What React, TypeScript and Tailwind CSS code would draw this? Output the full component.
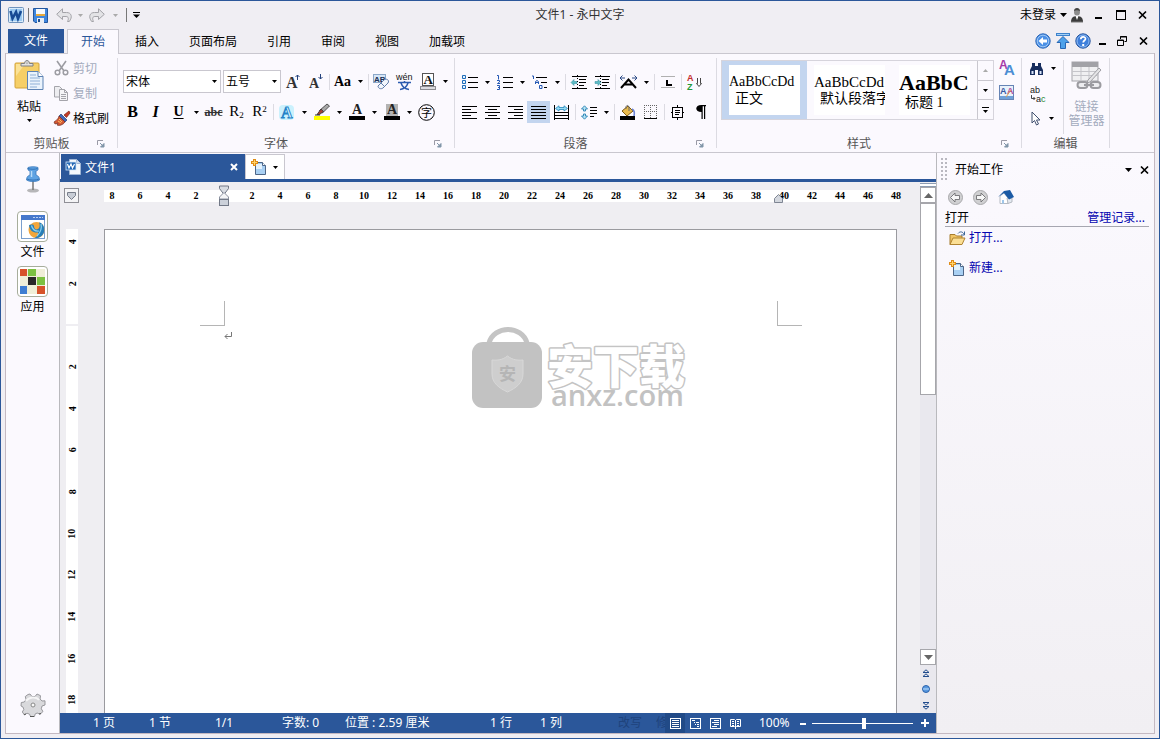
import React, { useState } from 'react';

interface SvgProps {
    w: number;
    h: number;
    children: React.ReactNode;
    className?: string;
}

const Svg: React.FC<SvgProps> = ({ w, h, children, className = '' }) => (
    <svg width={w} height={h} viewBox={`0 0 ${w} ${h}`} fill="none" className={`shrink-0 overflow-visible ${className}`} aria-hidden="true">
        {children}
    </svg>
);

const Caret: React.FC<{ className?: string }> = ({ className = 'text-black' }) => (
    <Svg w={5} h={3} className={className}>
        <path d="M0 0h5L2.5 3z" fill="currentColor" />
    </Svg>
);

const ToolButton: React.FC<{ label: string; active?: boolean; children: React.ReactNode }> = ({ label, active, children }) => (
    <button
        aria-label={label}
        className={`flex h-[22px] w-[23px] shrink-0 items-center justify-center font-['Liberation_Serif',serif] ${active ? 'bg-[#c3d5ef]' : 'hover:bg-[#dfe8f6]'}`}
    >
        {children}
    </button>
);

const CaretButton: React.FC<{ label: string }> = ({ label }) => (
    <button aria-label={label} className="flex h-[22px] w-3 shrink-0 items-center justify-center">
        <Caret />
    </button>
);

const Divider = () => <span className="flex h-4 w-1 shrink-0 justify-center"><span className="w-px bg-[#dcdbe2]" /></span>;

/* ---------- title bar icons ---------- */

const AppIcon = () => (
    <Svg w={16} h={16}>
        <rect x=".5" y=".5" width="15" height="15" rx="1" fill="#d9ebfa" stroke="#6f93bd" />
        <rect x="2" y="2" width="12" height="12" fill="#9ccaf1" />
        <path d="M2.5 4l2 7.5L8 5l2 6.5L13 4" stroke="#174a94" strokeWidth="2.6" />
    </Svg>
);

const SaveIcon = () => (
    <Svg w={15} h={15}>
        <path d="M.5.5h14v14H2L.5 13z" fill="#3f86dd" stroke="#23579f" />
        <rect x="3" y="1" width="9" height="6" fill="#f5f9fd" />
        <path d="M3 7h9" stroke="#e6a93c" strokeWidth="2" />
        <rect x="4" y="10" width="7" height="5" fill="#e8edf3" />
        <rect x="5" y="11" width="2" height="3" fill="#24518f" />
    </Svg>
);

const UndoIcon = ({ flip = false }: { flip?: boolean }) => (
    <Svg w={16} h={14} className={flip ? '-scale-x-100' : ''}>
        <path d="M6.5.8L.7 6.3l5.800 5.200V8.500H10c2.500 0 3 2 1.500 5h1.800c3.500-4.500 2.200-9-2.800-9h-4z" fill="#e3e3e6" stroke="#a3a3a8" />
    </Svg>
);

const PersonIcon = () => (
    <Svg w={14} h={15}>
        <ellipse cx="7" cy="4" rx="3" ry="3.5" fill="#8c8c8c" />
        <path d="M4 3c0-4 6-4 6 0-2-1-4-1-6 0z" fill="#444" />
        <path d="M1 14c0-4 2-6 6-6s6 2 6 6z" fill="#3c3c3c" />
        <path d="M5.5 8h3L7 12z" fill="#fff" />
        <path d="M1 14h12" stroke="#777" />
    </Svg>
);

const CloseIcon = () => (
    <Svg w={9} h={8}>
        <path d="M1 .5l7 7M8 .5l-7 7" stroke="#000" strokeWidth="1.7" />
    </Svg>
);

const MinIcon = () => <Svg w={8} h={8}><path d="M0 7h7" stroke="#000" strokeWidth="2" /></Svg>;

const MaxIcon = () => (
    <Svg w={10} h={10}>
        <rect x=".5" y=".5" width="9" height="9" stroke="#000" />
        <path d="M0 1h10" stroke="#000" strokeWidth="2" />
    </Svg>
);

const RestoreIcon = () => (
    <Svg w={10} h={10}>
        <path d="M3.5 3V.5h6v5h-2M3 1h7" stroke="#000" />
        <path d="M.5 4h6v5.5h-6zM0 4.500h7" stroke="#000" />
    </Svg>
);

const BackIcon = () => (
    <Svg w={16} h={16}>
        <circle cx="8" cy="8" r="7.2" fill="#4b90e6" stroke="#2e68b8" />
        <circle cx="8" cy="8" r="5.800" stroke="#9cc6f5" />
        <path d="M3.5 8L8 4v2.500h4v3H8V12z" fill="#fff" />
    </Svg>
);

const UpIcon = () => (
    <Svg w={14} h={16}>
        <rect x=".5" y=".5" width="13" height="2" fill="#a5d1f6" stroke="#3d82cc" />
        <path d="M7 3.5L1 9.500h3.500v6h5v-6H13z" fill="#4da1ea" stroke="#2767b5" />
    </Svg>
);

const HelpIcon = () => (
    <Svg w={16} h={16}>
        <circle cx="8" cy="8" r="7.2" fill="#3e7fdb" stroke="#27569f" />
        <circle cx="8" cy="8" r="6" stroke="#8db9f1" />
        <path d="M5.8 6.2c0-3 4.700-3 4.700-.4 0 1.700-2.300 1.700-2.300 3.600" stroke="#fff" strokeWidth="1.7" />
        <rect x="7.2" y="11" width="2" height="2" fill="#fff" />
    </Svg>
);

/* ---------- clipboard icons ---------- */

const PasteIcon = () => (
    <Svg w={30} h={31}>
        <rect x="1" y="3" width="24" height="25" rx="1" fill="#f6cf67" stroke="#d3a33a" />
        <path d="M2 4h9L2 16z" fill="#fbe297" />
        <path d="M7 6V3.500h3.500c0-4 5-4 5 0H19V6z" fill="#e3e3e3" stroke="#808080" />
        <circle cx="13" cy="2.8" r="1" fill="#fff" stroke="#888" strokeWidth=".6" />
        <path d="M13.5 11.500H24l5 5v13H13.500z" fill="#eaf3fc" stroke="#5d83b4" />
        <path d="M24 11.500v5h5" fill="#fff" stroke="#5d83b4" />
        <path d="M16 15h6M16 18h10M16 21h10M16 24h10M16 27h7" stroke="#8fb0d6" />
    </Svg>
);

const CutIcon = () => (
    <Svg w={15} h={15}>
        <path d="M3 0l7 10M12 0L5 10" stroke="#9c9ca2" strokeWidth="1.6" />
        <ellipse cx="3.5" cy="11.5" rx="2.3" ry="2.2" stroke="#9c9ca2" strokeWidth="1.5" />
        <ellipse cx="11.5" cy="11.5" rx="2.3" ry="2.2" stroke="#9c9ca2" strokeWidth="1.5" />
    </Svg>
);

const CopyIcon = () => (
    <Svg w={15} h={15}>
        <path d="M.5.5h5l2.500 2.500v8H.5z" fill="#ededf0" stroke="#a4a4aa" />
        <path d="M5.5 3.500h5l3 3v8h-8z" fill="#f5f5f7" stroke="#a4a4aa" />
        <path d="M10.5 3.500v3h3M7 8.500h5M7 10.500h5M7 12.500h5" stroke="#a4a4aa" />
    </Svg>
);

const BrushIcon = () => (
    <Svg w={16} h={15}>
        <path d="M15 0l-5 4 2.500 2.500L16 2z" fill="#c63a26" stroke="#7d2416" strokeWidth=".7" />
        <path d="M7 3l6 6-2 2-6-6z" fill="#4067b8" stroke="#263c77" strokeWidth=".7" />
        <path d="M5 5l6 6c-2 3-6 4-8 3l1-2-3 1-1-2c1-1 4-2 5-6z" fill="#d55a35" stroke="#6d2a20" strokeWidth=".7" />
        <path d="M5 8l3 3M4 10l3 2" stroke="#f6bf61" />
    </Svg>
);

const LaunchIcon = () => (
    <Svg w={8} h={8}>
        <path d="M.5 5V.5H6" stroke="#9a9aa6" />
        <path d="M3 3l3 3M7 3.500V7H3.500z" stroke="#8095a8" fill="#8095a8" />
    </Svg>
);

/* ---------- font icons ---------- */

const EraserIcon = () => (
    <Svg w={17} h={17}>
        <rect x=".5" y="1.5" width="12" height="8" fill="#d6e6f7" stroke="#8ba7c8" />
        <text x="1" y="8.5" fontSize="8" fontWeight="bold" fontFamily="Liberation Sans" fill="#1a2f55">AB</text>
        <path d="M5 13l6-6c2-2 6 0 4 3l-5 5c-2 1.500-5 .5-5-2z" fill="#f2f6fc" stroke="#5f7ca9" />
        <path d="M8 10l4 4" stroke="#5f7ca9" />
    </Svg>
);

const PinyinIcon = () => (
    <Svg w={17} h={17}>
        <text x="0" y="7" fontSize="9" fontFamily="Liberation Sans" fill="#111">wén</text>
        <path d="M2 9.500h13M8.500 8v1.500M5 10c1 3 4 6 8 6.500M12 10c-1 3-4 6-8 6.500" stroke="#2c5cb0" strokeWidth="1.5" />
    </Svg>
);

const BoxedA = () => (
    <Svg w={16} h={17}>
        <rect x="2.5" y=".5" width="11" height="12" fill="#fff" stroke="#555" />
        <text x="3.5" y="11" fontSize="13" fontWeight="bold" fontFamily="Liberation Serif" fill="#111">A</text>
        <rect x=".5" y="13.5" width="15" height="3" fill="#dcdce0" stroke="#8d8d92" />
    </Svg>
);

const GrowA = ({ up }: { up: boolean }) => (
    <Svg w={15} h={16}>
        <text x="1" y={up ? 14 : 14} fontSize={up ? 16 : 14} fontWeight="bold" fontFamily="Liberation Serif" fill="#333">A</text>
        <path d={up ? 'M12.500 6V1M10.500 3l2-2 2 2' : 'M12.500 0v5M10.500 3l2 2 2-2'} stroke="#24427c" />
    </Svg>
);

const GlowA = () => (
    <Svg w={17} h={17}>
        <rect x="1" y="1" width="15" height="15" rx="4" fill="#cbf1fd" />
        <text x="3" y="14" fontSize="16" fontWeight="bold" fontFamily="Liberation Serif" fill="#d5f3fd" stroke="#2382c8" strokeWidth=".9">A</text>
    </Svg>
);

const HighlightIcon = () => (
    <Svg w={16} h={16}>
        <rect x="0" y="12" width="16" height="4" fill="#ffff00" />
        <path d="M13 0l2.500 2-7 7-3-2.500z" fill="#a8a8a8" stroke="#333" strokeWidth=".8" />
        <path d="M7 5l2.500 2.500-4 3H3z" fill="#a64334" stroke="#333" strokeWidth=".8" />
        <path d="M1 11h5" stroke="#333" />
    </Svg>
);

const ColorA = ({ shaded }: { shaded: boolean }) => (
    <Svg w={16} h={16}>
        {shaded && <rect x="2" y="0" width="12" height="12" fill="#b3b3b3" />}
        <text x="3" y="10" fontSize="14" fontWeight="bold" fontFamily="Liberation Serif" fill="#222">A</text>
        <rect x="0" y="12" width="16" height="4" fill="#000" />
    </Svg>
);

const CircledChar = () => (
    <Svg w={17} h={17}>
        <circle cx="8.5" cy="8.5" r="7.8" stroke="#000" />
        <text x="3" y="12.5" fontSize="11" fontFamily="Noto Sans CJK SC" fill="#000">字</text>
    </Svg>
);

/* ---------- paragraph icons ---------- */

const BulletIcon = () => (
    <Svg w={16} h={15}>
        <path d="M.5.5h3v3h-3zM.5 5.500h3v3h-3zM.5 10.500h3v3h-3z" fill="#e6f2fb" stroke="#1f6dba" />
        <path d="M6 2.500h10M6 7.500h10M6 12.500h10" stroke="#000" />
    </Svg>
);

const NumberIcon = () => (
    <Svg w={16} h={15}>
        <path d="M0 .5h1.500v4M0 5.500h2.500v1.500L.5 8.500h2.500M0 10.500h2.500v4H0M1 12.500h2" stroke="#2458b4" />
        <path d="M6 2.500h10M6 7.500h10M6 12.500h10" stroke="#000" />
    </Svg>
);

const MultiIcon = () => (
    <Svg w={16} h={15}>
        <path d="M0 1h1.500v3M3.500 9V6.500L5 5.500 6.500 6.500V9M3.500 7.500h3M7.500 10.500h2.500v3H7.500z" stroke="#2458b4" />
        <path d="M4 2.500h11M9 7.500h6M12 12.500h3" stroke="#000" />
    </Svg>
);

const IndentIcon = ({ out }: { out: boolean }) => (
    <Svg w={16} h={15}>
        <path d="M1 1.500h15M8 4.500h7M8 7.500h7M8 10.500h5M1 13.500h15" stroke="#000" />
        <path d="M6.5 0v15" stroke="#000" strokeDasharray="1 2" />
        <path d={out ? 'M0 7.500l3-3v2h3v2H3v2z' : 'M7 7.500l-3-3v2H1v2h3v2z'} fill="#5dbcc5" stroke="#2c8a9c" strokeWidth=".5" />
    </Svg>
);

const ScaleIcon = () => (
    <Svg w={17} h={14}>
        <path d="M1 13l7.500-8.500L16 13M4.500 9.500h8" stroke="#000" strokeWidth="2" />
        <path d="M0 3h5M2.500.5L0 3l2.500 2.500M17 3h-5M14.500.5L17 3l-2.500 2.500" stroke="#2b4a86" />
    </Svg>
);

const TabStopIcon = () => (
    <Svg w={14} h={14}>
        <path d="M0 1.500h14M0 12.500h14" stroke="#b0b0b0" />
        <path d="M6 5v5h5" stroke="#000" strokeWidth="2" />
    </Svg>
);

const SortIcon = () => (
    <Svg w={16} h={16}>
        <text x="0" y="7" fontSize="9" fontWeight="bold" fontFamily="Liberation Sans" fill="#c42c2c">A</text>
        <text x="0" y="16" fontSize="9" fontWeight="bold" fontFamily="Liberation Sans" fill="#239a3a">Z</text>
        <path d="M10.5 4v5.500h-1l2.500 3 2.500-3h-1V4" stroke="#444" />
    </Svg>
);

const ALIGN = {
    left: 'M0 1.500h15M0 4.500h9M0 7.500h15M0 10.500h9M0 13.500h15',
    center: 'M0 1.500h15M3 4.500h9M0 7.500h15M3 10.500h9M0 13.500h15',
    right: 'M0 1.500h15M6 4.500h9M0 7.500h15M6 10.500h9M0 13.500h15',
    justify: 'M0 1.500h15M0 4.500h15M0 7.500h15M0 10.500h15M0 13.500h15',
};

const AlignIcon = ({ kind }: { kind: keyof typeof ALIGN }) => (
    <Svg w={15} h={15}><path d={ALIGN[kind]} stroke="#000" /></Svg>
);

const DistributeIcon = () => (
    <Svg w={15} h={15}>
        <path d="M.5 0v15M14.500 0v15M0 7.500h15M0 10.500h15M0 13.500h15" stroke="#000" />
        <path d="M1.5 3.500L5 .8v1.700h5V.8l3.500 2.700L10 6V4.500H5V6z" fill="#9adcf5" stroke="#2489bd" strokeWidth=".8" />
    </Svg>
);

const SpacingIcon = () => (
    <Svg w={16} h={15}>
        <path d="M3.5.8L6.500 4h-2v2h-2V4h-2zM3.500 14.200L.5 11h2V9h2v2h2z" fill="#b7e4f5" stroke="#2b83b4" strokeWidth=".9" />
        <path d="M9 2.500h7M9 5.500h7M9 8.500h7M9 11.500h4" stroke="#000" />
    </Svg>
);

const BucketIcon = () => (
    <Svg w={15} h={15}>
        <path d="M2 6l6-5 5 5-6 5z" fill="#e8b94c" stroke="#7d5a16" />
        <path d="M6 4c-1-4 3-5 3-1v3" stroke="#6c6c6c" />
        <path d="M12 4c2 1 3 3 2 7" stroke="#6a83d5" strokeWidth="1.6" />
        <rect y="11" width="15" height="4" fill="#000" />
    </Svg>
);

const BorderIcon = () => (
    <Svg w={13} h={14}>
        <path d="M0 .5h13M0 6.500h13M.5 0v13M6.500 0v13M12.500 0v13" stroke="#666" strokeDasharray="1 1" />
        <path d="M0 13.500h13" stroke="#000" />
    </Svg>
);

const FrameIcon = () => (
    <Svg w={13} h={15}>
        <rect x="1.5" y="2.5" width="10" height="10" stroke="#000" />
        <path d="M4 5.500h5M4 7.500h5M4 9.500h4M6.500 0v2.500M6.500 12.500V15M0 7.500h1.500M11.500 7.500H13" stroke="#000" />
    </Svg>
);

const PilcrowIcon = () => (
    <Svg w={10} h={14}>
        <path d="M5.5 0H10v1.200H9.200V14H8V1.200H6.700V14H5.500V7C-1.500 7-1.500 0 5.500 0z" fill="#000" />
    </Svg>
);

/* ---------- style and editing icons ---------- */

const StyleAIcon = () => (
    <Svg w={15} h={16}>
        <text x="0" y="9" fontSize="12" fontWeight="bold" fontFamily="Liberation Sans" fill="#a63aa8">A</text>
        <text x="5" y="15" fontSize="15" fontWeight="bold" fontFamily="Liberation Sans" fill="#4b8ed4">A</text>
    </Svg>
);

const StyleEditIcon = () => (
    <Svg w={15} h={15}>
        <rect x=".5" y=".5" width="14" height="14" fill="#e9f1fb" stroke="#6684b5" />
        <path d="M1 12.500h13" stroke="#6ea0d8" strokeWidth="3" />
        <text x="1" y="9" fontSize="9" fontWeight="bold" fontFamily="Liberation Sans" fill="#3759a2">A</text>
        <text x="8" y="9" fontSize="9" fontWeight="bold" fontFamily="Liberation Sans" fill="#b04a98">A</text>
        <path d="M12 5l-5 7" stroke="#d59d50" />
    </Svg>
);

const BinocularIcon = () => (
    <Svg w={13} h={12}>
        <path d="M2 0h3v3h3V0h3v3l2 4v5H8V7H5v5H0V7l2-4z" fill="#172d5e" />
        <path d="M1.5 8h2v3h-2zM9.500 8h2v3h-2z" fill="#d8e4f8" />
    </Svg>
);

const ReplaceIcon = () => (
    <Svg w={17} h={16}>
        <text x="0" y="7" fontSize="9" fontFamily="Liberation Sans" fill="#222">ab</text>
        <text x="6" y="16" fontSize="9" fontFamily="Liberation Sans" fill="#222">a<tspan fill="#258a30">c</tspan></text>
        <path d="M1.5 9v3.500H5M3.500 11L5 12.500 3.500 14" stroke="#444" />
    </Svg>
);

const CursorIcon = () => (
    <Svg w={10} h={15}>
        <path d="M1 1v11l2.500-2.500 2 4.500L7.500 13l-2-4H9z" fill="#fff" stroke="#41506f" />
    </Svg>
);

const LinkManagerIcon = () => (
    <Svg w={31} h={29}>
        <rect x="1" y="1" width="26" height="19" fill="#f0f0f2" stroke="#a5a5aa" />
        <rect x="1" y="1" width="26" height="5" fill="#a2a2a7" />
        <path d="M1 10.500h26M1 14.500h26M10 6v14M18 6v14" stroke="#c5c5ca" />
        <path d="M28 7l2 2-11 12-3 1 1-3z" fill="#e4e4e6" stroke="#a0a0a5" />
        <rect x="6.5" y="21" width="10" height="6" rx="3" fill="#ededf0" stroke="#9b9ba0" strokeWidth="2" />
        <rect x="19.5" y="21" width="10" height="6" rx="3" fill="#ededf0" stroke="#9b9ba0" strokeWidth="2" />
        <path d="M13 24h10" stroke="#9b9ba0" strokeWidth="2" />
    </Svg>
);

/* ---------- document area icons ---------- */

const PinIcon = () => (
    <Svg w={18} h={28}>
        <ellipse cx="9" cy="24.5" rx="6" ry="2" fill="#b7b7b9" />
        <path d="M9 15v9" stroke="#777" strokeWidth="1.5" />
        <path d="M4 1.500C6 .5 12 .5 14 1.500v2.500l-2 1v4c3 1 3.500 3 3.500 5-3 2-10 2-13 0 0-2 .5-4 3.500-5V5L4 4z" fill="#5ea3e3" stroke="#3b78bb" strokeWidth=".8" />
        <path d="M3.5 2.500c3 1 8 1 10 0M3 13c3 1.500 9 1.500 12 0" stroke="#3170b4" />
        <path d="M7.5 5v6" stroke="#b8dcf8" strokeWidth="1.5" />
    </Svg>
);

const FilesIcon = () => (
    <Svg w={24} h={24}>
        <rect x=".5" y=".5" width="23" height="23" fill="#fff" stroke="#7a9fcd" />
        <rect x="0" y="0" width="24" height="5" fill="#4679cc" />
        <path d="M12 2.500h10" stroke="#b9d1f2" strokeDasharray="2 1" />
        <circle cx="15.5" cy="15" r="8" fill="#f2a63a" />
        <path d="M8 10c3-1 5-.5 5 1 0 3 2 4 4 3 2-1 2-5 1-6.500 4 .5 6 5 5 9.500-1 4-5 6.500-9.500 6 3-1.500 4-3.500 3.500-5.500C12 18 8.500 15.500 8 10z" fill="#267fb9" />
        <path d="M10.5 10.500c1 4 4 6 7.500 5.500M20 9c1 4-1 9-4 12" stroke="#8fd2ed" strokeWidth="1.2" />
    </Svg>
);

const AppsIcon = () => (
    <Svg w={25} h={25}>
        <rect width="25" height="25" fill="#f0eed8" />
        <rect x="0" y="0" width="7" height="7" fill="#d7522b" />
        <rect x="8" y="0" width="8" height="7" fill="#7cc142" />
        <rect x="8" y="8" width="8" height="8" fill="#2a2729" />
        <rect x="17" y="8" width="8" height="8" fill="#7cc142" />
        <rect x="0" y="17" width="7" height="8" fill="#3f7dd2" />
        <rect x="17" y="17" width="8" height="8" fill="#d7522b" />
    </Svg>
);

const GearIcon = () => (
    <Svg w={24} h={24}>
        <path
            d="M9 1l2 2.500h3L16 1l3.500 1.700-.4 3.300 1.900 2 3-.2 0 4.200-3 1-.7 2.800 1.700 2.700-2.900 2.700-3-1.200-2.100 1.200-.5 2.300h-4l-1-2.300-2.500-1L3.500 22 1.300 19l1.500-2.500L2 14l-2-1 .3-3.500 3-.5L5 6.500 4.300 3.500 7 1.500z"
            fill="#d9d9dc" stroke="#8f8f93" strokeWidth=".9" strokeLinejoin="round"
        />
        <path d="M5 8c3-4 10-5 13-1" stroke="#f5f5f6" strokeWidth="2" />
        <path d="M3 21.500l2-.5M9 23.500h4M18 21l2-.5" stroke="#555" />
        <circle cx="12" cy="12" r="2" fill="#f8f8f8" stroke="#888" />
    </Svg>
);

const DocIcon = () => (
    <Svg w={15} h={16}>
        <path d="M3.5.5h7l4 4v11h-11z" fill="#f4f8fc" stroke="#a0b6d4" />
        <path d="M10.5.5v4h4" fill="#cfdded" stroke="#a0b6d4" />
        <rect x="0" y="3" width="10" height="8" fill="#2166b4" stroke="#d7e8fa" strokeWidth=".8" />
        <path d="M1.5 5l1.500 4 2-4 1.500 4L8.500 5" stroke="#fff" strokeWidth="1.2" />
    </Svg>
);

const NewDocIcon = () => (
    <Svg w={16} h={16}>
        <path d="M4.5 3.500h7l3 3v9h-10z" fill="#a9d0f3" stroke="#4d6688" />
        <path d="M5 5h6v5H5z" fill="#e4f2fd" />
        <path d="M11.5 3.500v3h3" fill="#fff" stroke="#4d6688" />
        <path d="M3.5 0v7M0 3.500h7" stroke="#e08d18" strokeWidth="3" />
        <path d="M3.5 1v5M1 3.500h5" stroke="#ffd56e" />
    </Svg>
);

const FolderIcon = () => (
    <Svg w={17} h={15}>
        <path d="M1 13.500V3.500h5l1.500 1.500H13v3" fill="#f0c566" stroke="#a77c2e" />
        <path d="M1 13.500l3-6.500h12l-3 6.500z" fill="#fbdf95" stroke="#b08330" />
        <path d="M9 2.500c2-2.500 5-2 6 1M15.500.5v3.500H12" stroke="#3c6797" />
    </Svg>
);

const RoundArrow = ({ flip = false }: { flip?: boolean }) => (
    <Svg w={15} h={15} className={flip ? '-scale-x-100' : ''}>
        <circle cx="7.5" cy="7.5" r="7" fill="#d0d0d2" stroke="#a9a9ac" />
        <path d="M2.5 7.500L7 3v2.500h4.500v4H7V12z" fill="#f7f7f7" stroke="#6f6f73" strokeWidth=".9" />
    </Svg>
);

const HomeIcon = () => (
    <Svg w={16} h={14}>
        <path d="M2 6l4-3 4 5v5.500H2z" fill="#fff" stroke="#b5bac2" />
        <path d="M9 8h5v4l-4 1.500z" fill="#e4e9f0" stroke="#b5bac2" />
        <path d="M0 7l6-6 6-1 4 7-5 2.500L6 3z" fill="#1c5ba5" />
        <path d="M4 10h2v3.500H4z" fill="#9fc6ea" />
    </Svg>
);

const IndentMarker = () => (
    <Svg w={10} h={22}>
        <path d="M.5 1h9v2.500L5 9.500.5 3.500z" fill="#d7dbe2" stroke="#727987" />
        <path d="M5 7.500L9.500 12v2h-9v-2z" fill="#f4f5f7" stroke="#8b91a0" />
        <rect x=".5" y="14.5" width="9" height="6" fill="#ccd1da" stroke="#727987" />
    </Svg>
);

const ViewIcon = ({ d }: { d: string }) => (
    <Svg w={11} h={11}>
        <rect x=".5" y=".5" width="10" height="10" stroke="#fff" />
        <path d={d} stroke="#fff" />
    </Svg>
);

const DoubleArrow = ({ down = false }: { down?: boolean }) => (
    <Svg w={8} h={9} className={down ? 'rotate-180' : ''}>
        <path d="M1 3.500L4 .8l3 2.700zM1 7.500l3-2.700 3 2.700z" stroke="#1f4a8c" />
    </Svg>
);

/* ---------- layout pieces ---------- */

const Group: React.FC<{ title: string; launcher?: boolean; className: string; children: React.ReactNode }> = ({ title, launcher = true, className, children }) => (
    <section aria-label={title} className={`flex shrink-0 ${className}`}>
        <div className="flex min-w-0 flex-1 flex-col">
            {children}
            <div className="mt-auto flex h-4 items-center text-[#555]">
                <span className="flex-1 text-center">{title}</span>
                {launcher && (
                    <button aria-label={`${title}设置`} className="flex w-5 justify-start"><LaunchIcon /></button>
                )}
            </div>
        </div>
        <div className="my-1 w-px bg-[#dcdbe2]" />
    </section>
);

const Combo: React.FC<{ label: string; options: string[]; className: string }> = ({ label, options, className }) => (
    <div className={`relative ${className}`}>
        <select aria-label={label} className="h-[23px] w-full appearance-none border border-[#c9c7cf] bg-white px-0.5 text-xs leading-4">
            {options.map(o => <option key={o}>{o}</option>)}
        </select>
        <span className="pointer-events-none absolute inset-y-0 right-1 flex items-center"><Caret /></span>
    </div>
);

const RIBBON_TABS = ['插入', '页面布局', '引用', '审阅', '视图', '加载项'];
const H_LEFT = [8, 6, 4, 2];
const H_RIGHT = Array.from({ length: 24 }, (_, i) => (i + 1) * 2);
const V_TICKS = [4, 2, 0, 2, 4, 6, 8, 10, 12, 14, 16, 18];

const STYLES = [
    { sample: 'AaBbCcDd', name: '正文', size: 'h-[18px] leading-[18px] text-sm' },
    { sample: 'AaBbCcDd', name: '默认段落字体', size: 'h-[18px] leading-[18px] text-[15px]' },
    { sample: 'AaBbC', name: '标题 1', size: 'h-[22px] leading-[20px] text-[22px] font-bold' },
];

const STATUS = [
    { text: '1 页', width: 'w-14' },
    { text: '1 节', width: 'w-[66px]' },
    { text: '1/1', width: 'w-[67px]' },
    { text: '字数: 0', width: 'w-[63px]' },
    { text: '位置 : 2.59 厘米', width: 'w-[145px]' },
    { text: '1 行', width: 'w-[50px]' },
    { text: '1 列', width: 'w-[50px]' },
];

const TitleBar = () => (
    <header className="flex h-7 items-center pr-3 pl-[7px]">
        <AppIcon />
        <span className="mx-1 h-3.5 w-px bg-[#777]" />
        <button aria-label="保存" className="mr-2"><SaveIcon /></button>
        <button aria-label="撤销"><UndoIcon /></button>
        <button aria-label="撤销列表" className="px-1.5"><Caret className="text-[#aaa]" /></button>
        <button aria-label="恢复"><UndoIcon flip /></button>
        <button aria-label="恢复列表" className="px-2"><Caret className="text-[#aaa]" /></button>
        <span className="mr-1.5 h-3.5 w-px bg-[#777]" />
        <button aria-label="自定义快速访问工具栏">
            <Svg w={7} h={6}><path d="M0 .5h7" stroke="#000" /><path d="M0 2.500h7L3.500 6z" fill="#000" /></Svg>
        </button>
        <h1 className="flex-1 text-center text-[#333]">文件1 - 永中文字</h1>
        <button className="flex items-center gap-1">未登录<Svg w={7} h={4}><path d="M0 0h7L3.500 4z" fill="#000" /></Svg></button>
        <span className="mr-[11px] ml-[3px]"><PersonIcon /></span>
        <button aria-label="最小化" className="mr-[13px]"><MinIcon /></button>
        <button aria-label="最大化" className="mr-3"><MaxIcon /></button>
        <button aria-label="关闭"><CloseIcon /></button>
    </header>
);

const RibbonTabs = () => (
    <nav className="flex h-6 items-stretch pr-[11px] pl-[7px]">
        <button className="w-14 bg-[#2b579a] text-white">文件</button>
        <button className="z-10 -mb-px ml-[3px] w-[52px] border border-b-0 border-[#c9c7cf] bg-[#fbf9fe] text-[#2b579a]">开始</button>
        <span className="w-px" />
        {RIBBON_TABS.map(t => <button key={t} className="px-[15px] pt-px">{t}</button>)}
        <div className="ml-auto flex items-center">
            <button aria-label="返回"><BackIcon /></button>
            <button aria-label="上传" className="mx-[5px]"><UpIcon /></button>
            <button aria-label="帮助" className="mr-2"><HelpIcon /></button>
            <button aria-label="最小化文档" className="mr-2.5"><MinIcon /></button>
            <button aria-label="还原文档" className="mr-3"><RestoreIcon /></button>
            <button aria-label="关闭文档"><CloseIcon /></button>
        </div>
    </nav>
);

const Ribbon = () => (
    <div className="flex h-[100px] overflow-hidden border-y border-[#c9c7cf] bg-[#fbf9fe]">
        <Group title="剪贴板" className="w-28">
            <div className="flex pl-2">
                <button className="flex w-[30px] flex-col items-center pt-1.5">
                    <PasteIcon />
                    <span className="mt-1.5 mb-0.5 h-5 leading-5">粘贴</span>
                    <Caret />
                </button>
                <div className="ml-2.5 flex flex-col pt-0.5">
                    <button disabled className="flex h-[25px] items-center gap-1 text-[#a3abbd]"><CutIcon />剪切</button>
                    <button disabled className="flex h-[25px] items-center gap-1 text-[#a3abbd]"><CopyIcon />复制</button>
                    <button className="flex h-[25px] items-center gap-[3px]"><BrushIcon />格式刷</button>
                </div>
            </div>
        </Group>
        <Group title="字体" className="w-[337px]">
            <div className="flex items-center pt-4 pl-[5px]">
                <Combo label="字体" options={['宋体', '黑体', '楷体']} className="mr-0.5 w-[98px]" />
                <Combo label="字号" options={['五号', '小四', '四号']} className="w-[58px]" />
                <ToolButton label="增大字号"><GrowA up /></ToolButton>
                <ToolButton label="减小字号"><GrowA up={false} /></ToolButton>
                <Divider />
                <ToolButton label="更改大小写"><span className="text-sm font-bold">Aa</span></ToolButton>
                <CaretButton label="大小写选项" />
                <Divider />
                <ToolButton label="清除格式"><EraserIcon /></ToolButton>
                <ToolButton label="拼音指南"><PinyinIcon /></ToolButton>
                <ToolButton label="字符边框"><BoxedA /></ToolButton>
                <CaretButton label="边框选项" />
            </div>
            <div className="flex items-center pt-2 pl-[3px]">
                <ToolButton label="加粗"><span className="text-base font-bold">B</span></ToolButton>
                <ToolButton label="倾斜"><span className="text-base font-bold italic">I</span></ToolButton>
                <ToolButton label="下划线"><span className="text-sm font-bold underline underline-offset-2">U</span></ToolButton>
                <CaretButton label="下划线选项" />
                <ToolButton label="删除线"><span className="text-xs font-bold text-[#333] line-through">abc</span></ToolButton>
                <ToolButton label="下标"><span className="text-[15px]">R<sub className="text-[9px]">2</sub></span></ToolButton>
                <ToolButton label="上标"><span className="text-[15px]">R<sup className="text-[9px]">2</sup></span></ToolButton>
                <Divider />
                <ToolButton label="文本效果"><GlowA /></ToolButton>
                <CaretButton label="文本效果选项" />
                <ToolButton label="突出显示"><HighlightIcon /></ToolButton>
                <CaretButton label="突出显示选项" />
                <ToolButton label="字体颜色"><ColorA shaded={false} /></ToolButton>
                <CaretButton label="字体颜色选项" />
                <ToolButton label="字符底纹"><ColorA shaded /></ToolButton>
                <CaretButton label="字符底纹选项" />
                <ToolButton label="带圈字符"><CircledChar /></ToolButton>
            </div>
        </Group>
        <Group title="段落" className="w-[262px]">
            <div className="flex items-center pt-[17px] pl-[3px]">
                <ToolButton label="项目符号"><BulletIcon /></ToolButton>
                <CaretButton label="项目符号选项" />
                <ToolButton label="编号"><NumberIcon /></ToolButton>
                <CaretButton label="编号选项" />
                <ToolButton label="多级列表"><MultiIcon /></ToolButton>
                <CaretButton label="多级列表选项" />
                <Divider />
                <ToolButton label="减少缩进"><IndentIcon out /></ToolButton>
                <ToolButton label="增加缩进"><IndentIcon out={false} /></ToolButton>
                <Divider />
                <ToolButton label="字符缩放"><ScaleIcon /></ToolButton>
                <CaretButton label="字符缩放选项" />
                <Divider />
                <ToolButton label="制表位"><TabStopIcon /></ToolButton>
                <Divider />
                <ToolButton label="排序"><SortIcon /></ToolButton>
            </div>
            <div className="flex items-center pt-2 pl-[3px]">
                <ToolButton label="左对齐"><AlignIcon kind="left" /></ToolButton>
                <ToolButton label="居中"><AlignIcon kind="center" /></ToolButton>
                <ToolButton label="右对齐"><AlignIcon kind="right" /></ToolButton>
                <ToolButton label="两端对齐" active><AlignIcon kind="justify" /></ToolButton>
                <ToolButton label="分散对齐"><DistributeIcon /></ToolButton>
                <Divider />
                <ToolButton label="行距"><SpacingIcon /></ToolButton>
                <CaretButton label="行距选项" />
                <Divider />
                <ToolButton label="底纹"><BucketIcon /></ToolButton>
                <ToolButton label="边框"><BorderIcon /></ToolButton>
                <Divider />
                <ToolButton label="图文框"><FrameIcon /></ToolButton>
                <ToolButton label="显示编辑标记"><PilcrowIcon /></ToolButton>
            </div>
        </Group>
        <Group title="样式" className="w-[305px]">
            <div className="flex pt-1.5 pl-1">
                <div className="flex h-[60px] w-[273px] border border-[#d6d4dc]">
                    {STYLES.map((s, i) => (
                        <button key={s.name} className={`w-[85px] px-[7px] py-1 text-left ${i === 0 ? 'bg-[#c3d5ef]' : ''}`}>
                            <span className="flex h-[50px] flex-col overflow-hidden bg-white pt-2 whitespace-nowrap">
                                <span className={`font-['Liberation_Serif',serif] ${s.size}`}>{s.sample}</span>
                                <span className="pl-1.5 font-['Liberation_Serif','Noto_Sans_CJK_SC',serif] text-sm leading-4">{s.name}</span>
                            </span>
                        </button>
                    ))}
                    <div className="flex flex-1 flex-col divide-y divide-[#c9c7cf] border-l border-[#c9c7cf]">
                        <button aria-label="上一行" className="flex flex-1 items-center justify-center"><Caret className="rotate-180 text-[#aaa]" /></button>
                        <button aria-label="下一行" className="flex flex-1 items-center justify-center"><Caret /></button>
                        <button aria-label="更多样式" className="flex flex-1 flex-col items-center justify-center gap-0.5">
                            <span className="h-px w-[7px] bg-black" />
                            <Caret />
                        </button>
                    </div>
                </div>
                <div className="ml-[5px] flex flex-col gap-[9px]">
                    <button aria-label="更改样式"><StyleAIcon /></button>
                    <button aria-label="编辑样式"><StyleEditIcon /></button>
                </div>
            </div>
        </Group>
        <Group title="编辑" launcher={false} className="w-[88px]">
            <div className="flex pl-2">
                <div className="flex w-[33px] flex-col pt-0.5">
                    <button aria-label="查找" className="flex h-[25px] items-center gap-2"><BinocularIcon /><Caret /></button>
                    <button aria-label="替换" className="flex h-[25px] items-center"><ReplaceIcon /></button>
                    <button aria-label="选择" className="flex h-[25px] items-center gap-2 pl-px"><CursorIcon /><Caret /></button>
                </div>
                <div className="mt-1.5 h-[74px] w-px bg-[#dcdbe2]" />
                <button disabled className="flex flex-1 flex-col items-center pt-[7px] leading-[14px] text-[#a3abbd]">
                    <LinkManagerIcon />
                    <span className="mt-2.5">链接</span>
                    <span>管理器</span>
                </button>
            </div>
        </Group>
    </div>
);

const SideBar = () => (
    <aside className="flex w-[54px] shrink-0 flex-col items-center border-r border-[#b9b9bd] bg-[#fbf9fe] pb-4">
        <button aria-label="固定" className="mt-[13px]"><PinIcon /></button>
        <button className="mt-[17px] flex flex-col items-center">
            <span className="flex size-[31px] items-center justify-center rounded border border-[#a7ad9c] bg-white"><FilesIcon /></span>
            <span className="h-5 leading-5">文件</span>
        </button>
        <button className="mt-1 flex flex-col items-center">
            <span className="flex size-[31px] items-center justify-center rounded border border-[#a7ad9c] bg-white"><AppsIcon /></span>
            <span className="h-5 leading-5">应用</span>
        </button>
        <button aria-label="设置" className="mt-auto"><GearIcon /></button>
    </aside>
);

const Watermark = () => (
    <svg width="216" height="82" viewBox="0 0 216 82" fill="none" className="absolute top-[98px] left-[367px] overflow-visible">
        <path d="M17 15C22-3 50-3 55 15" stroke="#c4c4c4" strokeWidth="5" />
        <rect y="14" width="70" height="66" rx="11" fill="#c2c2c2" />
        <path d="M35.5 28c5 4 10 4.500 15.500 4v14c0 9-7 14-15.500 18C27 60 20 55 20 46V32c5.500.5 10.500 0 15.500-4z" fill="#cecece" stroke="#d8d8d8" />
        <text x="27" y="52" fontSize="17" fontWeight="bold" fontFamily="Noto Sans CJK SC" fill="#b5b5b5">安</text>
        <text x="75" y="55" fontSize="46" fontWeight="900" fontFamily="Noto Sans CJK SC" fill="#fff" stroke="#c4c4c4" strokeWidth="3" strokeLinejoin="round" paintOrder="stroke">安下载</text>
        <text x="79" y="78" fontSize="29" fontWeight="600" fontFamily="Open Sans" fill="#c2c2c2">anxz.com</text>
    </svg>
);

const HorizontalRuler = () => (
    <div className="flex h-[47px] pt-1.5 pl-1">
        <button aria-label="制表符类型" className="mr-[25px] flex size-[15px] items-center justify-center border border-[#8f8f96] bg-[#f4f4f6]">
            <Svg w={9} h={8}><path d="M.5.5h8v3l-4 4-4-4z" fill="#c8cdd6" stroke="#777d8a" /></Svg>
        </button>
        <div className="mt-0.5 flex h-3 w-[796px] items-center gap-3 bg-white font-['Liberation_Serif',serif] text-[10px] leading-3 font-bold">
            {H_LEFT.map(n => <span key={n} className="w-4 shrink-0 text-center">{n}</span>)}
            <span className="flex w-4 shrink-0 justify-center"><IndentMarker /></span>
            {H_RIGHT.map(n => (
                <span key={n} className="relative w-4 shrink-0 text-center">
                    {n}
                    {n === 40 && (
                        <Svg w={9} h={9} className="absolute top-1 -left-0.5"><path d="M4.5.5l4 4v4h-8v-4z" fill="#d3d7de" stroke="#7e8593" /></Svg>
                    )}
                </span>
            ))}
        </div>
    </div>
);

const VerticalRuler = () => (
    <div className="mr-[26px] ml-1.5 flex w-3 shrink-0 flex-col justify-between bg-white font-['Liberation_Serif',serif] text-[10px] font-bold">
        {V_TICKS.map((n, i) => (
            <span key={i} className="flex h-[26px] items-center justify-center">
                {n === 0 ? <span className="h-0.5 w-full bg-[#efeef2]" /> : <span className="-rotate-90">{n}</span>}
            </span>
        ))}
    </div>
);

const ScrollBar = () => (
    <div className="mt-px flex w-4 shrink-0 flex-col bg-[#e9e8ee]">
        <div className="h-1 border-y border-[#8e9db3] bg-white" />
        <button aria-label="向上滚动" className="flex h-4 items-center justify-center border border-[#a6a6ab] bg-white">
            <Svg w={9} h={5}><path d="M0 5h9L4.500 0z" fill="#666" /></Svg>
        </button>
        <div className="h-48 border border-[#a6a6ab] bg-white" />
        <button aria-label="向下滚动" className="mt-auto flex h-4 items-center justify-center border border-[#a6a6ab] bg-white">
            <Svg w={9} h={5}><path d="M0 0h9L4.500 5z" fill="#666" /></Svg>
        </button>
        <button aria-label="上一页" className="flex h-4 items-center justify-center pr-1"><DoubleArrow /></button>
        <button aria-label="选择浏览对象" className="flex h-4 items-center justify-center pr-1">
            <Svg w={8} h={8}><circle cx="4" cy="4" r="3.5" fill="#5797df" stroke="#2b62ac" /><path d="M1 4h6" stroke="#bcdcfa" /></Svg>
        </button>
        <button aria-label="下一页" className="flex h-4 items-center justify-center pr-1"><DoubleArrow down /></button>
    </div>
);

const StatusBar = () => {
    const [zoom, setZoom] = useState(52);
    return (
        <footer className="flex h-5 shrink-0 items-center bg-[#2b579a] pr-[7px] pl-[33px] whitespace-nowrap text-white">
            {STATUS.map(s => <span key={s.text} className={`shrink-0 ${s.width}`}>{s.text}</span>)}
            <span className="ml-auto w-[38px] text-[#1f437c]">改写</span>
            <span className="w-[9px] overflow-hidden text-[#1f437c]">修</span>
            <button aria-label="页面视图" className="flex h-5 w-5 items-center justify-center bg-[#214a87]"><ViewIcon d="M2 2.500h7M2 4.500h7M2 6.500h7M2 8.500h7" /></button>
            <button aria-label="大纲视图" className="flex w-5 justify-center"><ViewIcon d="M2 2.500h3M4 4.500h1M6 4.500h3M5 6.500h1M7 6.500h2M7 8.500h2" /></button>
            <button aria-label="普通视图" className="flex w-5 justify-center"><ViewIcon d="M4 2.500h5M2 4.500h7M4 6.500h5M2 8.500h5" /></button>
            <button aria-label="阅读视图" className="mr-3.5 flex w-5 justify-center">
                <Svg w={11} h={11}><path d="M.5 1.500h4l1 1 1-1h4v7h-4l-1 1-1-1h-4zM5.500 2v9M2 3.500h2M2 5.500h2M2 7.500h2M7 3.500h2M7 5.500h2M7 7.500h2" stroke="#fff" /></Svg>
            </button>
            <span className="w-[41px]">100%</span>
            <button aria-label="缩小" className="flex w-2"><Svg w={6} h={9}><path d="M0 5h6" stroke="#fff" strokeWidth="2" /></Svg></button>
            <input
                type="range"
                aria-label="显示比例"
                value={zoom}
                onChange={e => setZoom(Number(e.target.value))}
                className="mr-2 ml-1 h-3 w-[101px] appearance-none bg-transparent [&::-webkit-slider-runnable-track]:h-px [&::-webkit-slider-runnable-track]:bg-white [&::-webkit-slider-thumb]:-mt-[5px] [&::-webkit-slider-thumb]:h-[11px] [&::-webkit-slider-thumb]:w-1 [&::-webkit-slider-thumb]:appearance-none [&::-webkit-slider-thumb]:bg-white"
            />
            <button aria-label="放大"><Svg w={8} h={8}><path d="M0 4h8M4 0v8" stroke="#fff" strokeWidth="2" /></Svg></button>
        </footer>
    );
};

const DocumentArea = () => (
    <main className="flex min-w-0 flex-1 flex-col">
        <div className="flex h-[29px] shrink-0 items-stretch border-b-[3px] border-[#2b579a] bg-[#fbf9fe] pt-px">
            <div className="ml-px flex w-[184px] items-center bg-[#2b579a] pr-[7px] pl-[5px] text-white">
                <DocIcon />
                <span className="ml-1 flex-1 pt-0.5">文件1</span>
                <button aria-label="关闭文件1"><Svg w={8} h={8}><path d="M1 1l6 6M7 1L1 7" stroke="#fff" strokeWidth="2" /></Svg></button>
            </div>
            <button aria-label="新建文档" className="flex w-10 items-center gap-1.5 border border-b-0 border-[#c9c7cf] bg-white pl-[5px]"><NewDocIcon /><Caret /></button>
        </div>
        <div className="flex min-h-0 flex-1 bg-[#efeef2]">
            <div className="flex min-w-0 flex-1 flex-col overflow-hidden">
                <HorizontalRuler />
                <div className="flex min-h-0 flex-1 overflow-hidden">
                    <VerticalRuler />
                    <article className="relative mr-[23px] min-w-0 flex-1 border border-b-0 border-[#9a9a9f] bg-white pt-[71px] pr-[94px] pl-[95px]">
                        <div className="flex justify-between">
                            <span className="size-[25px] border-r border-b border-[#b5b5b5]" />
                            <span className="size-[25px] border-b border-l border-[#b5b5b5]" />
                        </div>
                        <Svg w={8} h={8} className="mt-1.5 ml-6"><path d="M7.5 0v4.500H1M3.500 2L1 4.500 3.500 7" stroke="#777" /></Svg>
                        <Watermark />
                    </article>
                </div>
            </div>
            <ScrollBar />
        </div>
        <StatusBar />
    </main>
);

const TaskPane = () => (
    <aside className="flex w-[218px] shrink-0 flex-col border-l border-[#b9b9bd] bg-linear-to-b from-[#fbf9fe] to-[#f1eff3] pr-[5px] pl-2">
        <div className="-ml-1 flex h-[34px] items-center">
            <Svg w={6} h={22} className="mt-[-2px]">
                <path d="M1 0v22M5 0v22" stroke="#b9b8c0" strokeWidth="2" strokeDasharray="2 2" />
            </Svg>
            <h2 className="ml-2 flex-1">开始工作</h2>
            <button aria-label="任务窗格菜单" className="mr-2"><Svg w={7} h={4}><path d="M0 0h7L3.500 4z" fill="#000" /></Svg></button>
            <button aria-label="关闭任务窗格"><CloseIcon /></button>
        </div>
        <div className="flex h-5 items-center gap-2.5 pl-[3px]">
            <button aria-label="后退"><RoundArrow /></button>
            <button aria-label="前进"><RoundArrow flip /></button>
            <button aria-label="主页"><HomeIcon /></button>
        </div>
        <div className="flex h-5 items-center justify-between border-b border-[#a6a6b0] pt-0.5 pr-1">
            <h3>打开</h3>
            <a href="#records" className="text-[#0505b0]">管理记录...</a>
        </div>
        <a href="#open" className="flex h-[22px] items-center gap-[3px] pl-1 text-[#0505b0]"><FolderIcon />打开...</a>
        <a href="#new" className="mt-2 flex h-[22px] items-center gap-1 pl-1 text-[#0505b0]"><NewDocIcon />新建...</a>
    </aside>
);

const App: React.FC = () => (
    <div className="flex h-screen flex-col overflow-hidden border border-[#2b579a] bg-[#f0eef3] font-['Noto_Sans','Noto_Sans_CJK_SC',sans-serif] text-xs text-black">
        <TitleBar />
        <RibbonTabs />
        <div className="mx-1 mb-1 flex min-h-0 flex-1 flex-col border-x border-b border-[#c4b9c2]">
            <Ribbon />
            <div className="flex min-h-0 flex-1">
                <SideBar />
                <DocumentArea />
                <TaskPane />
            </div>
        </div>
    </div>
);

export default App;
